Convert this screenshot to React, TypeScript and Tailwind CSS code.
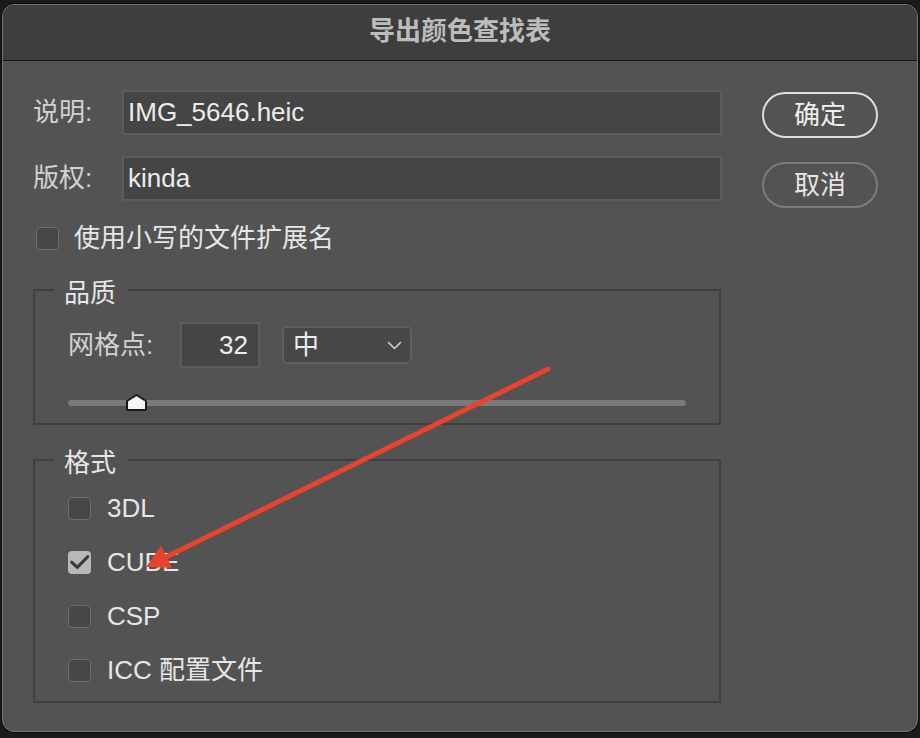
import React from "react";

function Box({ checked = false }: { checked?: boolean }) {
  if (checked) {
    return (
      <div className="w-[23px] h-[23px] rounded-[4px] bg-[#b8b8b8] flex items-center justify-center shrink-0">
        <svg width="23" height="23" viewBox="0 0 23 23">
          <path d="M3.6 11.2 L9.3 16.4 L19.8 5.6" fill="none" stroke="#3a3a3a" strokeWidth="3" strokeLinecap="round" strokeLinejoin="round" />
        </svg>
      </div>
    );
  }
  return <div className="w-[23px] h-[23px] rounded-[4px] border-[1.5px] border-[#6f6f6f] bg-[#474747] shrink-0" />;
}

function Group({ title, children }: { title: string; children: React.ReactNode }) {
  return (
    <fieldset className="border-2 border-[#3f3f3f] px-[19px] w-[688px]">
      <legend className="pt-[6px] pl-[10px] pr-[12px] text-[26px] leading-[26px] text-[#e6e6e6]">{title}</legend>
      {children}
    </fieldset>
  );
}

export default function App() {
  return (
    <div className="relative w-[920px] h-[738px] overflow-hidden bg-[#1b1b1b] pt-[4px] pl-[2px] font-['Liberation_Sans','Noto_Sans_CJK_SC',sans-serif]">
      <div className="w-[916px] h-[728px] rounded-[12px] border border-[#777777] shadow-[0_0_0_1px_#0b0b0b] bg-[#535353] overflow-hidden flex flex-col">
        <div className="h-[56px] shrink-0 bg-[#3e3e3e] border-b border-[#141414] flex items-center justify-center pb-[3px]">
          <span className="text-[26px] font-bold text-[#bcbcbc] tracking-[0px]">导出颜色查找表</span>
        </div>
        <div className="flex pl-[30px] pt-[29px]">
          <div className="w-[689px] flex flex-col">
            <div className="flex items-center h-[45px]">
              <span className="w-[89px] text-[26px] text-[#d2d2d2]">说明:</span>
              <div className="w-[600px] h-[45px] bg-[#454545] border-2 border-[#5c5c5c] flex items-center pl-[4px] text-[26px] text-[#ececec]">IMG_5646.heic</div>
            </div>
            <div className="flex items-center h-[45px] mt-[21px]">
              <span className="w-[89px] text-[26px] text-[#d2d2d2]">版权:</span>
              <div className="w-[600px] h-[45px] bg-[#454545] border-2 border-[#5c5c5c] flex items-center pl-[4px] text-[26px] text-[#ececec]">kinda</div>
            </div>
            <div className="flex items-center h-[24px] mt-[25px] ml-[3px] gap-[15px]">
              <Box />
              <span className="text-[26px] text-[#e6e6e6]">使用小写的文件扩展名</span>
            </div>
            <div className="mt-[24px]">
              <Group title="品质">
                <div className="px-[14px] pt-[16px] pb-[12px]">
                  <div className="flex items-center h-[46px]">
                    <span className="w-[112px] text-[26px] text-[#d2d2d2]">网格点:</span>
                    <div className="w-[80px] h-[46px] bg-[#454545] border-2 border-[#5c5c5c] flex items-center justify-end pr-[10px] text-[26px] text-[#ececec]">32</div>
                    <div className="ml-[22px] w-[130px] h-[38px] rounded-[5px] bg-[#474747] border-2 border-[#5e5e5e] flex items-center justify-between pl-[9px] pr-[8px]">
                      <span className="text-[26px] text-[#ececec] leading-none">中</span>
                      <svg width="15" height="9" viewBox="0 0 15 9">
                        <path d="M1.5 1.5 L7.5 7.5 L13.5 1.5" fill="none" stroke="#cfcfcf" strokeWidth="1.6" strokeLinecap="round" strokeLinejoin="round" />
                      </svg>
                    </div>
                  </div>
                  <div className="relative mt-[26px] h-[17px] flex items-center">
                    <div className="w-full h-[6px] rounded-full bg-[#7a7a7a]" />
                    <svg className="absolute left-[58px] top-0" width="21" height="17" viewBox="0 0 21 17">
                      <path d="M1 16 L1 7 L10.5 1 L20 7 L20 16 Z" fill="#f4f4f4" stroke="#1a1a1a" strokeWidth="2" strokeLinejoin="round" />
                    </svg>
                  </div>
                </div>
              </Group>
            </div>
            <div className="mt-[19px]">
              <Group title="格式">
                <div className="px-[14px] pt-[21px] pb-[19px] flex flex-col gap-[31px]">
                  {[
                    { t: "3DL", c: false },
                    { t: "CUBE", c: true },
                    { t: "CSP", c: false },
                    { t: "ICC 配置文件", c: false },
                  ].map((r) => (
                    <div key={r.t} className="flex items-center h-[23px] gap-[16px]">
                      <Box checked={r.c} />
                      <span className="text-[26px] text-[#e6e6e6]">{r.t}</span>
                    </div>
                  ))}
                </div>
              </Group>
            </div>
          </div>
          <div className="ml-[40px] mt-[2px] flex flex-col gap-[24px]">
            <div className="w-[116px] h-[46px] rounded-full border-2 border-[#dedede] flex items-center justify-center text-[26px] text-[#efefef]">确定</div>
            <div className="w-[116px] h-[46px] rounded-full border-2 border-[#7c7c7c] flex items-center justify-center text-[26px] text-[#e6e6e6]">取消</div>
          </div>
        </div>
      </div>
      <svg className="absolute left-0 top-0 pointer-events-none" width="920" height="738" viewBox="0 0 920 738">
        <line x1="548" y1="369" x2="166" y2="557" stroke="#e8432d" strokeWidth="5" strokeLinecap="round" />
        <polygon points="146,567 161.2,545.8 172,567.8" fill="#e8432d" />
      </svg>
    </div>
  );
}
